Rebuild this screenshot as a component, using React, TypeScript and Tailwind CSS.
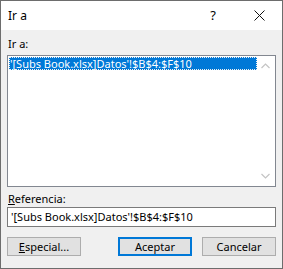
import { FC } from "react";

const font = { fontFamily: '"Noto Sans", "Open Sans", sans-serif' };

const Btn: FC<{ label: React.ReactNode; primary?: boolean }> = ({ label, primary }) => (
  <button
    className={
      primary
        ? "h-[19px] w-[74px] bg-[#e1e1e1] border-2 border-[#0078d7] text-[11px] leading-none text-black"
        : "h-[19px] w-[74px] bg-[#e1e1e1] border border-[#adadad] text-[11px] leading-none text-black"
    }
  >
    {label}
  </button>
);

export default function App() {
  const ref = "'[Subs Book.xlsx]Datos'!$B$4:$F$10";
  return (
    <div className="w-[283px] h-[269px] border border-[#6d6d6d] bg-[#f0f0f0] flex flex-col" style={font}>
      <div className="h-[29px] bg-white flex items-center pl-[7px] text-[12px] text-black">
        <span className="flex-1">Ir a</span>
        <span className="w-[46px] text-center text-[13px]">?</span>
        <span className="w-[46px] flex justify-center">
          <svg width="11" height="11" viewBox="0 0 11 11">
            <path d="M0.5 0.5 L10.5 10.5 M10.5 0.5 L0.5 10.5" stroke="#111" strokeWidth="1" />
          </svg>
        </span>
      </div>
      <div className="flex-1 flex flex-col px-[6px] pt-[6px] text-[11px] text-black">
        <div className="h-[16px] leading-[16px] pl-[1px]">Ir a:</div>
        <div className="mt-[3px] h-[132px] border border-[#828790] bg-white flex p-[1px]">
          <div className="flex-1">
            <div className="h-[13px] bg-[#0078d7] text-white leading-[13px] pl-[1px] outline-1 outline-dotted outline-offset-[-1px] outline-[#f0f0f0]">
              {ref}
            </div>
          </div>
          <div className="w-[17px] flex flex-col justify-between items-center py-[6px]">
            <svg width="9" height="6" viewBox="0 0 9 6">
              <path d="M0.5 5 L4.5 1 L8.5 5" fill="none" stroke="#c4c4c4" strokeWidth="1.2" />
            </svg>
            <svg width="9" height="6" viewBox="0 0 9 6">
              <path d="M0.5 1 L4.5 5 L8.5 1" fill="none" stroke="#c4c4c4" strokeWidth="1.2" />
            </svg>
          </div>
        </div>
        <div className="mt-[4px] h-[16px] leading-[16px] pl-[1px]">
          <span className="underline">R</span>eferencia:
        </div>
        <div className="h-[20px] border border-[#7a7a7a] bg-white leading-[18px] pl-[3px]">{ref}</div>
        <div className="mt-[10px] flex justify-between">
          <Btn label={<><span className="underline">E</span>special...</>} />
          <div className="flex gap-[10px]">
            <Btn label="Aceptar" primary />
            <Btn label="Cancelar" />
          </div>
        </div>
      </div>
    </div>
  );
}
